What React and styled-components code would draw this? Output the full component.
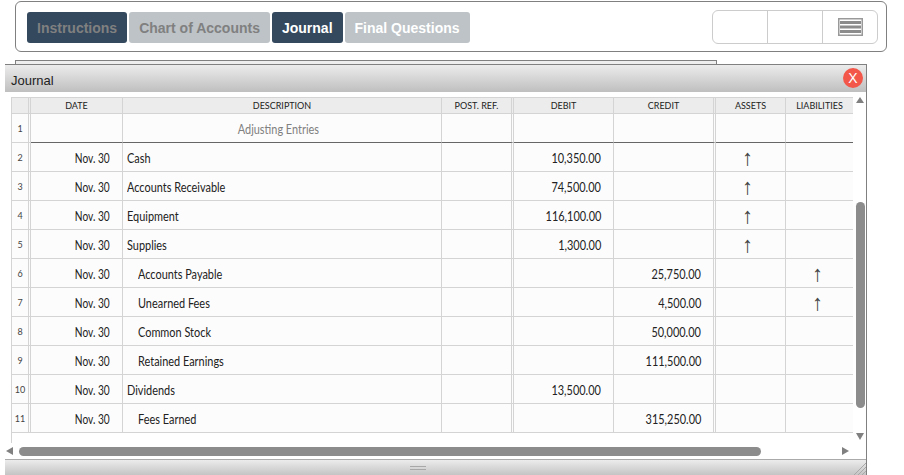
import React from 'react';
import styled, { createGlobalStyle } from 'styled-components';

const GlobalStyle = createGlobalStyle`
  html, body {
    margin: 0;
    padding: 0;
    background: #fff;
    overflow: hidden;
  }
  * { box-sizing: border-box; }
`;

const Page = styled.div`
  width: 904px;
  height: 475px;
  overflow: hidden;
  padding-top: 1px;
  font-family: 'Liberation Sans', Arial, sans-serif;
`;

const TopBar = styled.div`
  display: flex;
  align-items: center;
  justify-content: space-between;
  width: 872px;
  height: 51px;
  margin-left: 15px;
  padding: 0 8px 0 11px;
  border: 1px solid #808080;
  border-radius: 6px;
`;

const Tabs = styled.div`
  display: flex;
  gap: 2px;
  margin-top: 2px;
`;

const Tab = styled.div`
  height: 31px;
  padding: 0 10px;
  display: flex;
  align-items: center;
  border-radius: 3px;
  font-size: 14px;
  font-weight: 700;
  background: ${p => (p.$dark ? '#34495e' : '#bdc3c7')};
  color: ${p => p.$color};
`;

const ToolGroup = styled.div`
  display: flex;
  width: 166px;
  height: 34px;
  border: 1px solid #ccc;
  border-radius: 6px;
`;

const ToolButton = styled.div`
  flex: 1;
  display: flex;
  align-items: center;
  justify-content: center;
  & + & { border-left: 1px solid #ccc; }
`;

const BackSheet = styled.div`
  width: 702px;
  height: 4px;
  margin: 8px 0 0 15px;
  border: 1px solid #808080;
  border-bottom: 0;
  background: #eee;
`;

const Dialog = styled.div`
  display: flex;
  flex-direction: column;
  width: 862px;
  height: 411px;
  margin-left: 5px;
  border-top: 1px solid #808080;
  border-right: 1px solid #808080;
  background: #fff;
`;

const TitleBar = styled.div`
  display: flex;
  align-items: center;
  justify-content: space-between;
  height: 27px;
  flex: none;
  padding: 0 3px 0 6px;
  font-size: 13px;
  color: #222;
  background: linear-gradient(#ececec, #bfbfbf);
`;

const TitleText = styled.span`
  margin-top: 3px;
`;

const CloseButton = styled.div`
  width: 20px;
  height: 20px;
  margin-top: -1px;
  border-radius: 50%;
  background: #f2574a;
  color: #fff;
  font-size: 14px;
  display: flex;
  align-items: center;
  justify-content: center;
`;

const Body = styled.div`
  flex: 1;
  display: grid;
  grid-template-columns: 842px 1fr;
  grid-template-rows: 1fr 16px;
  padding: 5px 0 0 6px;
  min-height: 0;
`;

const Sheet = styled.div`
  grid-column: 1;
  grid-row: 1;
  border-left: 1px solid #d4d4d4;
  overflow: hidden;
  background: #fff;
`;

const Row = styled.div`
  display: grid;
  grid-template-columns: 19px 92px 319px 72px 100px 102px 70px 67px;
  height: ${p => (p.$head ? '17px' : '29px')};
  background: ${p => (p.$head ? '#ececec' : '#fcfcfc')};
  border-top: ${p => (p.$head ? '1px solid #d4d4d4' : '0')};
  font-family: 'Lato', sans-serif;
  color: #222;
`;

const Cell = styled.div`
  display: flex;
  align-items: center;
  min-width: 0;
  white-space: nowrap;
  font-size: 13px;
  padding-top: 2px;
  justify-content: ${p => p.$align || 'flex-start'};
  padding-right: ${p => p.$right || '0'};
  padding-left: ${p => p.$left || '0'};
  color: ${p => p.$color || 'inherit'};
  border-right: ${p => (p.$double ? '3px double #d4d4d4' : '1px solid #d4d4d4')};
  border-bottom: 1px solid ${p => (p.$rule ? '#666' : '#d4d4d4')};
  &:last-child { border-right: 0; }
`;

// the reference face is a condensed one, none is installed
const Narrow = styled.span`
  display: inline-block;
  transform: scaleX(${p => p.$scale || 0.84});
  transform-origin: ${p => p.$origin || 'left'} center;
`;

const HeadCell = styled(Cell)`
  font-size: 9px;
  padding-top: 0;
  justify-content: center;
`;

const NumCell = styled(Cell)`
  font-size: 9px;
  padding-top: 0;
  justify-content: center;
  color: #444;
`;

const ArrowGlyph = styled.span`
  font-family: 'Liberation Sans', sans-serif;
  font-size: 22px;
  line-height: 1;
  color: #444;
`;

const VBar = styled.div`
  position: relative;
  grid-column: 2;
  grid-row: 1;
`;

const ArrowUp = styled.div`
  position: absolute;
  top: 0;
  left: 3px;
  width: 0;
  height: 0;
  border-left: 4.5px solid transparent;
  border-right: 4.5px solid transparent;
  border-bottom: 6px solid #808080;
`;

const ArrowDown = styled(ArrowUp)`
  top: auto;
  bottom: 3px;
  border-bottom: 0;
  border-top: 7px solid #808080;
`;

const VThumb = styled.div`
  position: absolute;
  top: 105px;
  left: 3px;
  width: 9px;
  height: 206px;
  border-radius: 5px;
  background: #8c8c8c;
`;

const HBar = styled.div`
  grid-column: 1 / 3;
  grid-row: 2;
  display: flex;
  align-items: center;
  gap: 6px;
  margin-left: -5px;
`;

const HThumb = styled.div`
  width: 742px;
  height: 9px;
  border-radius: 5px;
  background: #8c8c8c;
`;

const ArrowLeft = styled.div`
  width: 0;
  height: 0;
  border-top: 4.5px solid transparent;
  border-bottom: 4.5px solid transparent;
  border-right: 7px solid #808080;
`;

const ArrowRight = styled.div`
  width: 0;
  height: 0;
  margin-left: 75px;
  border-top: 4.5px solid transparent;
  border-bottom: 4.5px solid transparent;
  border-left: 7px solid #808080;
`;

const Footer = styled.div`
  position: relative;
  flex: none;
  height: 16px;
  padding-right: 36px;
  border-top: 1px solid #aaa;
  background: linear-gradient(#ececec, #c4c4c4);
  display: flex;
  justify-content: center;
  align-items: center;
`;

const Grip = styled.div`
  width: 16px;
  height: 4px;
  border-top: 1px solid #a8a8a8;
  border-bottom: 1px solid #a8a8a8;
`;

const Corner = styled.svg`
  position: absolute;
  right: 0;
  bottom: 0;
`;

const rows = [
  { date: 'Nov. 30', desc: 'Cash', debit: '10,350.00', assets: true },
  { date: 'Nov. 30', desc: 'Accounts Receivable', debit: '74,500.00', assets: true },
  { date: 'Nov. 30', desc: 'Equipment', debit: '116,100.00', assets: true },
  { date: 'Nov. 30', desc: 'Supplies', debit: '1,300.00', assets: true },
  { date: 'Nov. 30', desc: 'Accounts Payable', credit: '25,750.00', liab: true },
  { date: 'Nov. 30', desc: 'Unearned Fees', credit: '4,500.00', liab: true },
  { date: 'Nov. 30', desc: 'Common Stock', credit: '50,000.00' },
  { date: 'Nov. 30', desc: 'Retained Earnings', credit: '111,500.00' },
  { date: 'Nov. 30', desc: 'Dividends', debit: '13,500.00' },
  { date: 'Nov. 30', desc: 'Fees Earned', credit: '315,250.00' }
];

const heads = ['DATE', 'DESCRIPTION', 'POST. REF.', 'DEBIT', 'CREDIT', 'ASSETS', 'LIABILITIES'];

const App = () => (
  <Page>
    <GlobalStyle />
    <TopBar>
      <Tabs>
        <Tab $dark $color='#808080'>Instructions</Tab>
        <Tab $color='#808080'>Chart of Accounts</Tab>
        <Tab $dark $color='#fff'>Journal</Tab>
        <Tab $color='#fff'>Final Questions</Tab>
      </Tabs>
      <ToolGroup>
        <ToolButton />
        <ToolButton />
        <ToolButton>
          <svg width='25' height='18' viewBox='0 0 25 18'>
            <rect x='0.75' y='0.75' width='23.5' height='16.5' fill='#fff' stroke='#999' strokeWidth='1.5' />
            <rect x='2' y='3' width='21' height='3' fill='#8c8c8c' />
            <rect x='2' y='7.5' width='21' height='3' fill='#8c8c8c' />
            <rect x='2' y='12' width='21' height='3' fill='#8c8c8c' />
          </svg>
        </ToolButton>
      </ToolGroup>
    </TopBar>
    <BackSheet />
    <Dialog>
      <TitleBar>
        <TitleText>Journal</TitleText>
        <CloseButton>X</CloseButton>
      </TitleBar>
      <Body>
        <Sheet>
          <Row $head>
            <HeadCell $double />
            {heads.map((h, i) => (
              <HeadCell key={h} $double={i === 2 || i === 4}>{h}</HeadCell>
            ))}
          </Row>
          <Row>
            <NumCell $double>1</NumCell>
            <Cell $rule />
            <Cell $rule $align='center' $right='7px' $color='#808080'>
              <Narrow $origin='center'>Adjusting Entries</Narrow>
            </Cell>
            <Cell $rule $double />
            <Cell $rule />
            <Cell $rule $double />
            <Cell $rule />
            <Cell $rule />
          </Row>
          {rows.map((r, i) => (
            <Row key={r.desc}>
              <NumCell $double>{i + 2}</NumCell>
              <Cell $align='flex-end' $right='12px'>
                <Narrow $origin='right' $scale={0.78}>{r.date}</Narrow>
              </Cell>
              <Cell $left={r.credit ? '15px' : '4px'}>
                <Narrow>{r.desc}</Narrow>
              </Cell>
              <Cell $double />
              <Cell $align='flex-end' $right='12px'>
                <Narrow $origin='right'>{r.debit}</Narrow>
              </Cell>
              <Cell $align='flex-end' $right='12px' $double>
                <Narrow $origin='right'>{r.credit}</Narrow>
              </Cell>
              <Cell $align='center' $right='6px'>{r.assets && <ArrowGlyph>↑</ArrowGlyph>}</Cell>
              <Cell $align='center' $right='4px'>{r.liab && <ArrowGlyph>↑</ArrowGlyph>}</Cell>
            </Row>
          ))}
        </Sheet>
        <VBar>
          <ArrowUp />
          <VThumb />
          <ArrowDown />
        </VBar>
        <HBar>
          <ArrowLeft />
          <HThumb />
          <ArrowRight />
        </HBar>
      </Body>
      <Footer>
        <Grip />
        <Corner width='14' height='14' viewBox='0 0 14 14'>
          <path d='M2 14L14 2M6 14L14 6M10 14L14 10' stroke='#a8a8a8' fill='none' />
        </Corner>
      </Footer>
    </Dialog>
  </Page>
);

export default App;
